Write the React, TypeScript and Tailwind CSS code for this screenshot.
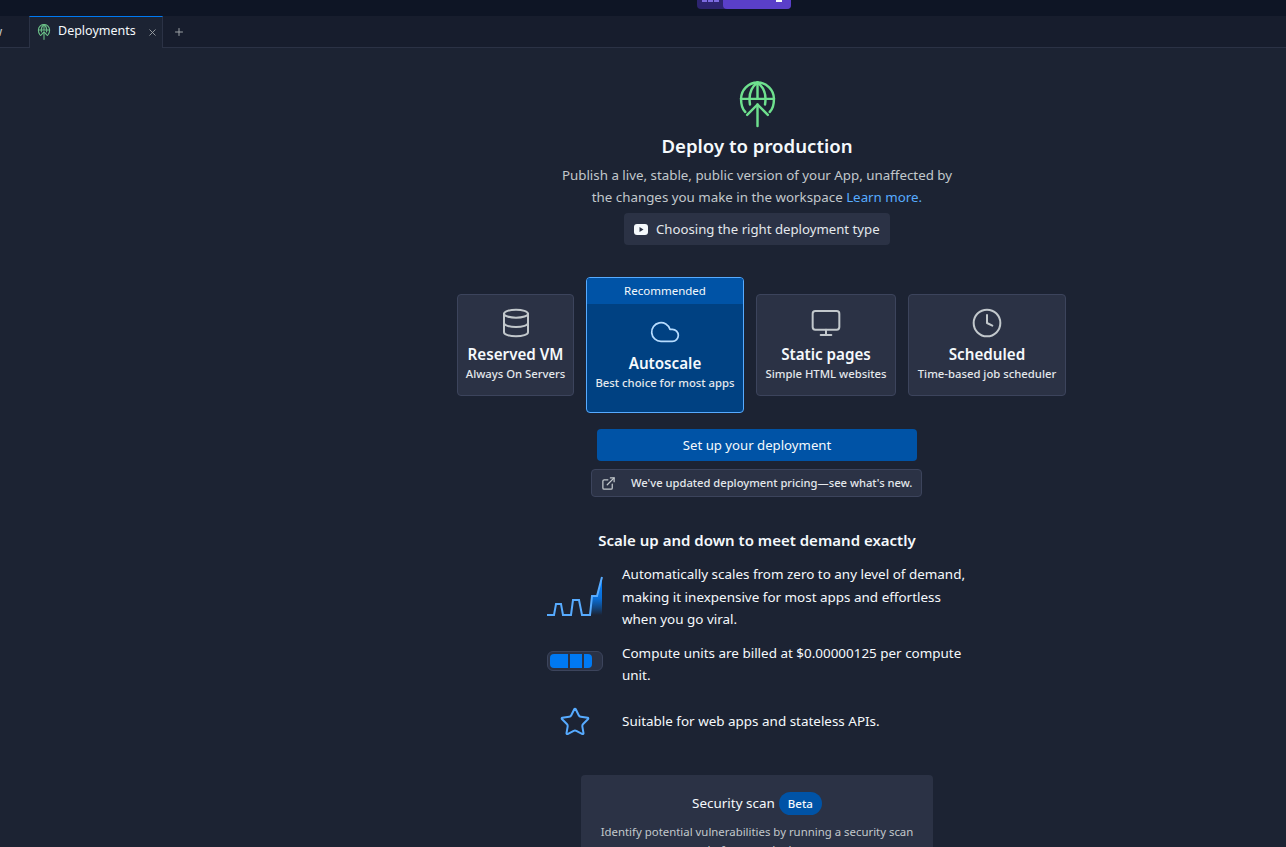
import { Database, Cloud, Monitor, Clock, ExternalLink, Star, X, Plus } from "lucide-react";

const font = "font-['Noto_Sans',sans-serif]";

const DeployIcon = ({ size, weight = 2.6 }: { size: number; weight?: number }) => (
  <svg width={size} height={size} viewBox="0 0 38 50" fill="none" stroke="currentColor" strokeWidth={weight} strokeLinecap="round" strokeLinejoin="round">
    <path d="M6 33C2.5 29.8 1.5 26 1.5 19C1.5 9.5 9.3 1.5 19 1.5S36.500 9.500 36.500 19C36.500 26 35.500 29.800 32 33" />
    <path d="M1.500 19H36.500" />
    <path d="M19 1.500C13 6 10.500 12 10.500 19C10.500 21 10.700 23 11 25" />
    <path d="M19 1.500C25 6 27.500 12 27.500 19C27.500 21 27.300 23 27 25" />
    <path d="M19 1.500V19" />
    <path d="M19 48V25" />
    <path d="M8 36L19 25L30 36" />
  </svg>
);

const PlanCard = ({ icon, title, sub, width }: { icon: React.ReactNode; title: string; sub: string; width: string }) => (
  <div className={`flex h-[102px] ${width} flex-col items-center rounded border border-[#3c445c] bg-[#2b3245] pt-[12px]`}>
    <div className="h-[32px] text-[#c2c8cc]">{icon}</div>
    <div className="mt-[4px] text-[15.2px] leading-[22px] font-semibold text-[#f5f9fc]">{title}</div>
    <div className="mt-px text-[11.3px] leading-[16px] font-medium text-[#e4e8ec]">{sub}</div>
  </div>
);

const SpikeChart = () => (
  <svg width="56" height="42" viewBox="0 0 56 42">
    <defs>
      <linearGradient id="spike" x1="0" y1="0" x2="0" y2="1">
        <stop offset="0" stopColor="#0a84ff" />
        <stop offset="0.55" stopColor="#0a6fd8" />
        <stop offset="1" stopColor="#0079f2" stopOpacity="0" />
      </linearGradient>
    </defs>
    <path d="M43 39L45 20H50L55 1V39Z" fill="url(#spike)" />
    <path d="M0 39H7L9 28H14L16 39H24L26 24H32L35 39H43L45 20H50L55 1" fill="none" stroke="#57abff" strokeWidth="2" />
  </svg>
);

const Battery = () => (
  <div className="mb-[6px] flex h-5 w-14 items-center gap-[2px] rounded-md border border-[#3c445c] bg-[#2b3245] pl-[2px]">
    <div className="h-[14px] w-[18px] rounded-l-sm bg-[#0079f2]" />
    <div className="h-[14px] w-3 bg-[#0079f2]" />
    <div className="h-[14px] w-2 rounded-r-sm bg-[#0079f2]" />
  </div>
);

export default function App() {
  return (
    <div className={`flex h-[847px] flex-col overflow-hidden bg-[#1c2333] ${font}`}>
      <div className="h-4 shrink-0 bg-[#0e1525] pl-[697px]">
        <div className="flex h-[9px] w-[94px] overflow-hidden rounded-b bg-[#2d2470]">
          <div className="flex w-[26px] justify-center gap-[1px]">
            <span className="h-[2px] w-[5px] bg-[#7c6be0]" />
            <span className="h-[2px] w-[5px] bg-[#7c6be0]" />
            <span className="h-[2px] w-[5px] bg-[#7c6be0]" />
          </div>
          <div className="flex flex-1 justify-end rounded-bl bg-[#5a3fc9] pr-[9px]">
            <span className="h-[2px] w-[6px] bg-[#f5f9fc]" />
          </div>
        </div>
      </div>

      <div className="flex h-8 shrink-0 items-center border-b border-[#2b3245] bg-[#171d2d]">
        <div className="w-[29px] shrink-0 overflow-hidden text-[13px] text-[#c2c8cc]">
          <span className="-ml-[8px] block">w</span>
        </div>
        <div className="flex h-8 w-[134px] items-center border-x border-t border-x-[#2b3245] border-t-[#0079f2] bg-[#1c2333] pl-[6px]">
          <span className="text-[#6bc088]"><DeployIcon size={16} weight={3.4} /></span>
          <span className="mb-[2px] ml-[6px] text-[12.500px] text-[#f5f9fc]">Deployments</span>
          <X size={11} className="ml-auto mr-[4px] text-[#9da2a6]" />
        </div>
        <Plus size={12} className="ml-[10px] mt-[1px] text-[#9da2a6]" />
      </div>

      <main className="flex flex-col items-center pl-[228px]">
        <span className="mt-[33px] text-[#6ee08e]"><DeployIcon size={47} /></span>
        <h1 className="mt-[5px] text-[18.600px] leading-[26px] font-semibold text-[#f5f9fc]">Deploy to production</h1>
        <p className="mt-[5px] text-center text-[13.330px] leading-[22px] text-[#c2c8cc]">
          Publish a live, stable, public version of your App, unaffected by
          <br />
          the changes you make in the workspace <span className="text-[#57abff]">Learn more.</span>
        </p>
        <div className="mt-[5px] flex h-8 w-[266px] items-center gap-2 rounded bg-[#2b3245] pl-[10px] pt-px text-[13.200px] text-[#e4e8ec]">
          <svg width="14" height="11" viewBox="0 0 14 11">
            <rect width="14" height="11" rx="3" fill="#f5f9fc" />
            <path d="M5.500 3L9.500 5.500L5.500 8Z" fill="#2b3245" />
          </svg>
          Choosing the right deployment type
        </div>

        <div className="mt-8 ml-[9px] flex items-center gap-3">
          <PlanCard width="w-[117px]" icon={<Database size={32} strokeWidth={1.5} />} title="Reserved VM" sub="Always On Servers" />
          <div className="flex h-[136px] w-[158px] flex-col overflow-hidden rounded border border-[#57abff] bg-[#004182]">
            <div className="h-[26px] bg-[#0053a6] text-center text-[11.5px] leading-[26px] text-[#f5f9fc]">Recommended</div>
            <div className="flex flex-col items-center pt-[12px]">
              <Cloud size={32} strokeWidth={1.3} className="text-[#b6dcff]" />
              <div className="mt-[4px] text-[15.2px] leading-[22px] font-semibold text-[#f5f9fc]">Autoscale</div>
              <div className="mt-px text-[11.3px] leading-[16px] font-medium text-[#e4e8ec]">Best choice for most apps</div>
            </div>
          </div>
          <PlanCard width="w-[140px]" icon={<Monitor size={32} strokeWidth={1.5} />} title="Static pages" sub="Simple HTML websites" />
          <PlanCard width="w-[158px]" icon={<Clock size={32} strokeWidth={1.5} />} title="Scheduled" sub="Time-based job scheduler" />
        </div>

        <button className="mt-4 h-8 w-80 rounded bg-[#0053a6] pt-px text-[13.200px] text-[#f5f9fc]">Set up your deployment</button>
        <div className="mt-2 mr-[1px] flex h-7 w-[331px] items-center rounded border border-[#3c445c] bg-[#2b3245] pl-[9px] text-[11.200px] font-medium text-[#e4e8ec]">
          <ExternalLink size={15} className="text-[#c2c8cc]" />
          <span className="ml-[15px]">We've updated deployment pricing—see what's new.</span>
        </div>

        <h2 className="mt-[32px] text-[15px] leading-[22px] font-semibold text-[#f5f9fc]">Scale up and down to meet demand exactly</h2>

        <div className="mt-[12px] flex w-[420px] flex-col gap-[11px] text-[13.450px] leading-[22.500px] text-[#f5f9fc]">
          <div className="flex items-center gap-[19px]">
            <div className="flex w-14 shrink-0 justify-center"><SpikeChart /></div>
            <p className="w-[345px]">Automatically scales from zero to any level of demand, making it inexpensive for most apps and effortless when you go viral.</p>
          </div>
          <div className="flex items-center gap-[19px]">
            <div className="flex w-14 shrink-0 justify-center"><Battery /></div>
            <p className="w-[345px]">Compute units are billed at $0.00000125 per compute unit.</p>
          </div>
          <div className="mt-[8px] flex items-center gap-[19px]">
            <div className="flex w-14 shrink-0 justify-center"><Star size={32} strokeWidth={1.5} className="text-[#57abff]" /></div>
            <p className="w-[345px]">Suitable for web apps and stateless APIs.</p>
          </div>
        </div>

        <div className="mt-[37px] flex h-[200px] w-[352px] shrink-0 flex-col items-center rounded bg-[#2b3245] pt-[17px]">
          <div className="flex items-center gap-1 text-[13.450px] text-[#f5f9fc]">
            Security scan
            <span className="rounded-full bg-[#0053a6] px-[9px] py-[3px] text-[11.500px] font-medium">Beta</span>
          </div>
          <p className="mt-[8px] w-[330px] text-center text-[11.400px] leading-[18px] text-[#c2c8cc]">
            Identify potential vulnerabilities by running a security scan before you deploy.
          </p>
        </div>
      </main>
    </div>
  );
}
